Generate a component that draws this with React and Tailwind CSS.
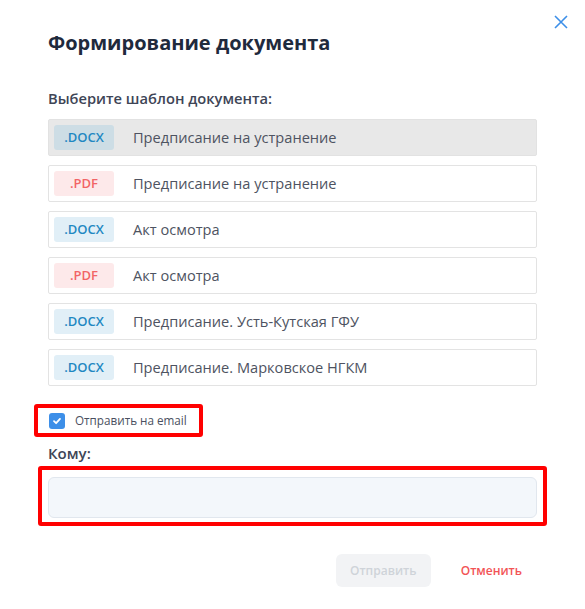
const templates = [
  { ext: "DOCX", title: "Предписание на устранение", active: true },
  { ext: "PDF", title: "Предписание на устранение" },
  { ext: "DOCX", title: "Акт осмотра" },
  { ext: "PDF", title: "Акт осмотра" },
  { ext: "DOCX", title: "Предписание. Усть-Кутская ГФУ" },
  { ext: "DOCX", title: "Предписание. Марковское НГКМ" },
]

function Badge({ ext, active }) {
  if (ext === "PDF") {
    return (
      <span className="w-[60px] h-[25px] flex items-center justify-center rounded-[3px] bg-[#fde9ea] text-[#f26466] text-[13px] font-semibold">
        .PDF
      </span>
    )
  }
  return (
    <span
      className={
        "w-[60px] h-[25px] flex items-center justify-center rounded-[3px] text-[#1f88c2] text-[13px] font-semibold " +
        (active ? "bg-[#cddde5]" : "bg-[#e1eff7]")
      }
    >
      .DOCX
    </span>
  )
}

export default function App() {
  return (
    <div className="w-[585px] h-[609px] bg-white relative font-['Open_Sans',sans-serif]">
      <button className="absolute top-[14px] right-[16px] text-[#3d8fe8]">
        <svg width="16" height="16" viewBox="0 0 16 16" fill="none" stroke="currentColor" strokeWidth="1.6">
          <path d="M2 2L14 14M14 2L2 14" />
        </svg>
      </button>

      <div className="px-12 pt-[28px]">
        <h2 className="text-[20px] leading-[30px] font-bold text-[#1f2a3d]">Формирование документа</h2>

        <p className="mt-[30px] text-[14.7px] leading-[20px] font-semibold text-[#3e4556]">Выберите шаблон документа:</p>

        <div className="mt-[11px] flex flex-col gap-[9px]">
          {templates.map((t, i) => (
            <div
              key={i}
              className={
                "h-[37px] flex items-center px-[5px] border rounded-[2px] " +
                (t.active ? "bg-[#e8e8e8] border-[#e2e2e2]" : "bg-white border-[#e3e3e3]")
              }
            >
              <Badge ext={t.ext} active={t.active} />
              <span className="ml-[19px] text-[14.6px] text-[#4e5361]">{t.title}</span>
            </div>
          ))}
        </div>

        <div className="mt-[18px] -ml-[14px] inline-flex items-center h-[33px] pl-[11px] pr-[12px] border-4 border-[#ff0000] rounded-[3px]">
          <span className="w-4 h-4 rounded-[3px] bg-[#3d8fe8] flex items-center justify-center">
            <svg width="10" height="10" viewBox="0 0 10 10" fill="none" stroke="white" strokeWidth="1.8" strokeLinecap="round" strokeLinejoin="round">
              <path d="M2 5.2L4.1 7.2L8 2.9" />
            </svg>
          </span>
          <span className="ml-[10px] text-[11.7px] text-[#4a5060]">Отправить на email</span>
        </div>

        <p className="mt-[5px] text-[15px] leading-[22px] font-semibold text-[#3e4556]">Кому:</p>

        <div className="mt-[2px] -mx-[10px] border-4 border-[#ff0000] rounded-[3px] pt-[7px] pb-[4px] px-[6px]">
          <div className="h-[41px] rounded-[6px] bg-[#f3f7fb] border border-[#e1e7ee]"></div>
        </div>

        <div className="mt-[28px] flex justify-end items-center">
          <button className="w-[95px] h-[33px] rounded-[6px] bg-[#f2f3f5] text-[#cfd3d9] text-[12px] font-semibold">
            Отправить
          </button>
          <button className="ml-[14px] h-[33px] pl-4 pr-[15px] text-[#f25456] text-[12px] font-semibold">Отменить</button>
        </div>
      </div>
    </div>
  )
}
